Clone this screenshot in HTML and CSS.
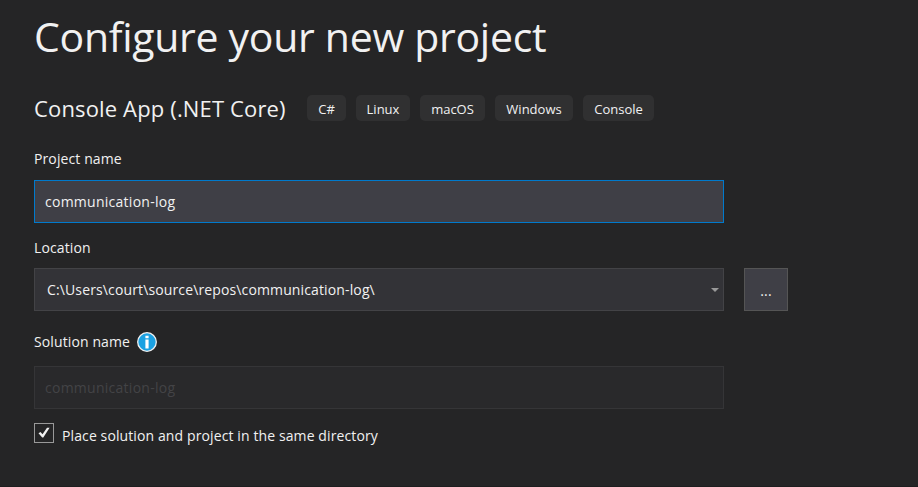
FILE: index.html
```html
<!DOCTYPE html>
<html lang="en">
<head>
<meta charset="utf-8">
<title>Configure your new project</title>
<link rel="stylesheet" href="styles.css">
</head>
<body>
<main class="dialog">
  <h1 class="title">Configure your new project</h1>
  <div class="template">
    <h2 class="template-name">Console App (.NET Core)</h2>
    <ul class="tags">
      <li class="tag tag-cs">C#</li>
      <li class="tag tag-linux">Linux</li>
      <li class="tag tag-mac">macOS</li>
      <li class="tag tag-win">Windows</li>
      <li class="tag tag-console">Console</li>
    </ul>
  </div>
  <div class="label label-project">Project name</div>
  <div class="field field-focused"><span class="value">communication-log</span></div>
  <div class="label label-location">Location</div>
  <div class="location-row">
    <div class="field field-combo">
      <span class="path">C:\Users\court\source\repos\communication-log\</span>
      <svg class="arrow" width="8" height="4" viewBox="0 0 8 4"><path d="M0 0h8L4 4z" fill="#999"/></svg>
    </div>
    <div class="browse">...</div>
  </div>
  <div class="label label-solution">
    <span>Solution name</span>
    <svg class="info" width="20" height="20" viewBox="0 0 20 20">
      <circle cx="10" cy="10" r="9.3" fill="#1ba1e2" stroke="#f1f1f1" stroke-width="1.3"/>
      <path d="M8.4 3.7h3.2v2.6H8.4zM8.4 7.4h3.2v9H8.4z" fill="#fff"/>
    </svg>
  </div>
  <div class="field field-disabled"><span class="value">communication-log</span></div>
  <div class="check-row">
    <span class="box">
      <svg width="12" height="12" viewBox="0 0 12 12"><path d="M0.5 6.2L2.5 5l2 2.3L9 0.8h2.6L5.3 10.5H4.2z" fill="#f1f1f1"/></svg>
    </span>
    <span class="check-text">Place solution and project in the same directory</span>
  </div>
</main>
</body>
</html>
```
FILE: styles.css
```css
* { box-sizing: border-box; }

body {
  margin: 0;
  height: 487px;
  overflow: hidden;
  background: #252526;
  color: #f1f1f1;
  font-family: "Open Sans", "Noto Sans", sans-serif;
  font-size: 14px;
  line-height: 20px;
  letter-spacing: 0.11px;
}

.dialog {
  height: 487px;
  padding: 8px 34px 0;
  border-bottom: 1px solid #1e1e1f;
}

.title {
  margin: 0;
  height: 56px;
  font-size: 41px;
  line-height: 56px;
  font-weight: 400;
  letter-spacing: -0.3px;
  white-space: nowrap;
}

.template {
  display: flex;
  margin-top: 31px;
  height: 26px;
}

.template-name {
  margin: 0;
  width: 273px;
  font-size: 22px;
  line-height: 27px;
  font-weight: 400;
  letter-spacing: 0.15px;
  white-space: nowrap;
}

.tags {
  display: flex;
  gap: 10px;
  margin: 0;
  padding: 0;
  list-style: none;
}

.tag {
  height: 26px;
  border-radius: 5px;
  background: #303031;
  font-size: 13px;
  line-height: 28px;
  letter-spacing: 0;
  text-align: center;
  white-space: nowrap;
}

.tag-cs { width: 39px; }
.tag-linux { width: 54px; }
.tag-mac { width: 65px; }
.tag-win { width: 78px; }
.tag-console { width: 71px; }

.label {
  display: flex;
  align-items: center;
  height: 20px;
}

.label-project { margin-top: 28px; }
.label-location { margin-top: 15px; }
.label-solution { margin-top: 21px; gap: 7px; }
.label-solution span { line-height: 22px; }

.field {
  display: flex;
  align-items: center;
  width: 690px;
  height: 43px;
  padding: 0 10px;
  border: 1px solid #434346;
}

.value { letter-spacing: 0.26px; }
.path { letter-spacing: 0.13px; }

.field-focused {
  margin-top: 11px;
  background: #3f3f46;
  border-color: #007acc;
}

.location-row {
  display: flex;
  gap: 20px;
  margin-top: 10px;
}

.field-combo {
  justify-content: space-between;
  padding: 0 4px 0 12px;
  background: #333337;
}

.browse {
  width: 44px;
  height: 43px;
  border: 1px solid #555;
  background: #3f3f46;
  line-height: 43px;
  text-align: center;
}

.field-disabled {
  margin-top: 14px;
  background: #29292b;
  border-color: #353537;
  color: #434346;
}

.check-row {
  display: flex;
  gap: 8px;
  margin-top: 14px;
}

.box {
  display: flex;
  align-items: center;
  justify-content: center;
  width: 20px;
  height: 20px;
  border: 1px solid #999;
}

.check-text { line-height: 26px; }
```
